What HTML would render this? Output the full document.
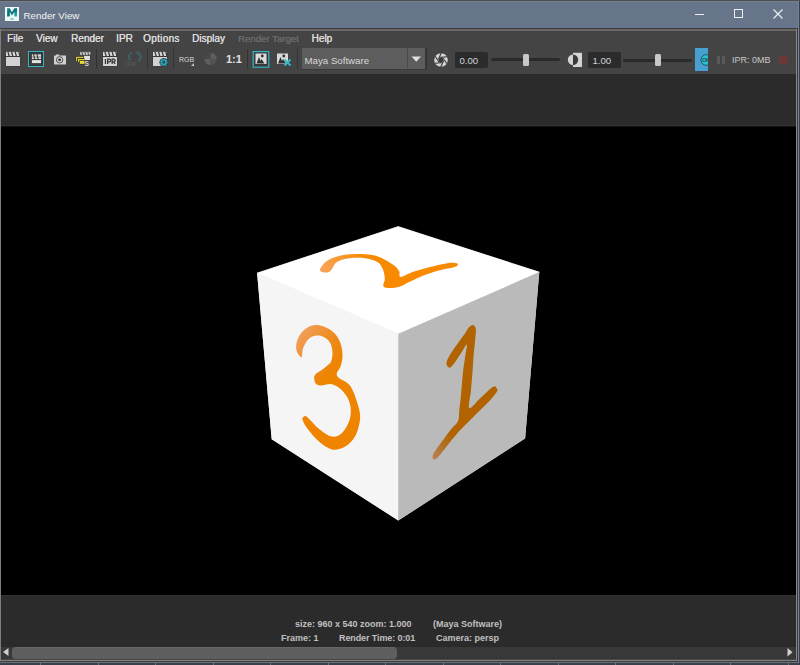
<!DOCTYPE html>
<html><head><meta charset="utf-8">
<style>
*{margin:0;padding:0;box-sizing:border-box}
html,body{width:800px;height:665px;overflow:hidden;background:#3a3a3a;font-family:"Liberation Sans",sans-serif}
.a{position:absolute}
.menu{position:absolute;top:33px;font-size:10px;color:#dcdcdc;text-shadow:0.35px 0 0 currentColor;line-height:12px;white-space:nowrap}
.sep{position:absolute;top:49px;width:1px;height:20px;background:#333}
.st{position:absolute;font-size:9px;font-weight:bold;color:#c0c0c0;line-height:10px;white-space:nowrap}
</style></head><body>
<!-- window frame top -->
<div class="a" style="left:0;top:0;width:800px;height:1px;background:#4a4f50"></div>
<div class="a" style="left:0;top:1px;width:798px;height:1px;background:#7a8090"></div>
<div class="a" style="left:0;top:2px;width:798px;height:26px;background:#667589"></div>
<div class="a" style="left:798px;top:1px;width:2px;height:664px;background:#3a3e44"></div>
<!-- title -->
<svg class="a" style="left:5px;top:7px" width="15" height="15" viewBox="0 0 15 15">
<defs><linearGradient id="mg" x1="0" y1="0" x2="1" y2="1"><stop offset="0" stop-color="#138a8a"/><stop offset="0.5" stop-color="#0b6f78"/><stop offset="1" stop-color="#22c2b8"/></linearGradient></defs>
<rect x="0" y="0" width="14" height="14" fill="#eef8f6"/>
<path d="M2.1 9.6V1.2H4.8L6.9 5.2 9.4 1.2H12.1V9.6H9.4V5L6.9 8.4 4.8 5V9.6z" fill="url(#mg)"/>
<rect x="5.3" y="11.2" width="3.5" height="1.4" fill="#60c8c8"/>
</svg>
<div class="a" style="left:23.5px;top:9.5px;font-size:9.8px;color:#f4f4f4;line-height:12px">Render View</div>
<!-- window controls -->
<div class="a" style="left:695px;top:14px;width:9px;height:1px;background:#f0f0f0"></div>
<div class="a" style="left:734px;top:9px;width:9px;height:9px;border:1px solid #f0f0f0"></div>
<svg class="a" style="left:773px;top:9px" width="10" height="10" viewBox="0 0 10 10"><path d="M0.5 0.5L9.5 9.5M9.5 0.5L0.5 9.5" stroke="#f0f0f0" stroke-width="1.1"/></svg>
<!-- inner frame -->
<div class="a" style="left:0;top:28px;width:798px;height:1px;background:#3c3a3e"></div>
<div class="a" style="left:0;top:29px;width:797px;height:2px;background:#6a6664"></div>
<div class="a" style="left:0;top:29px;width:1px;height:632px;background:#7e7e7e"></div>
<div class="a" style="left:796px;top:29px;width:1px;height:632px;background:#888"></div>
<div class="a" style="left:1px;top:31px;width:795px;height:43px;background:#444"></div>
<!-- menu -->
<div class="menu" style="left:7px">File</div>
<div class="menu" style="left:36px">View</div>
<div class="menu" style="left:71px">Render</div>
<div class="menu" style="left:116px">IPR</div>
<div class="menu" style="left:143px;letter-spacing:0.3px">Options</div>
<div class="menu" style="left:192px">Display</div>
<div class="menu" style="left:238px;color:#6a6a6a;font-size:9.6px">Render Target</div>
<div class="menu" style="left:311.5px">Help</div>
<!-- toolbar -->
<div class="sep" style="left:96px"></div>
<div class="sep" style="left:147px"></div>
<div class="sep" style="left:173px"></div>
<div class="sep" style="left:247px"></div>
<div class="sep" style="left:297px"></div>
<!-- icon1 clapboard -->
<svg class="a" style="left:5px;top:51px" width="16" height="16" viewBox="0 0 16 16">
<rect x="0.5" y="0" width="15" height="15.5" fill="#303030" opacity="0.6"/><rect x="1" y="0.8" width="14" height="4.2" fill="#d8d8d8"/>
<path d="M2.9 0.6l1.3 4.6M6.5 0.6l1.3 4.6M10.1 0.6l1.3 4.6M13.7 0.6l1.3 4.6" stroke="#3a3a3a" stroke-width="1.3"/>
<rect x="1" y="6" width="14" height="9" fill="#d2d2d2"/>
</svg>
<!-- icon2 teal border -->
<svg class="a" style="left:28px;top:51px" width="17" height="17" viewBox="0 0 17 17">
<rect x="0.5" y="0.5" width="15" height="15" fill="#333" stroke="#33b6c6" stroke-width="1"/>
<rect x="2" y="2" width="12" height="12" fill="#3c3c3c"/>
<rect x="3.9" y="3.4" width="9.1" height="4.6" fill="#dedede"/>
<path d="M5.6 3.2l1.1 5M9 3.2l1.1 5" stroke="#3a3a3a" stroke-width="1.1"/>
<rect x="3.9" y="5.6" width="9.1" height="0.8" fill="#3c3c3c" opacity="0.7"/>
<rect x="3.9" y="9.1" width="9.1" height="3" fill="#e2e2e2"/>
</svg>
<!-- icon3 camera -->
<svg class="a" style="left:53px;top:54px" width="14" height="11" viewBox="0 0 14 11">
<rect x="1" y="1.5" width="12" height="9" fill="#d0d0d0"/>
<rect x="3" y="0.5" width="3" height="1.5" fill="#d0d0d0"/>
<circle cx="6.6" cy="5.8" r="3.2" fill="#d0d0d0" stroke="#505050" stroke-width="1"/>
<circle cx="6.6" cy="5.8" r="1.4" fill="#303030"/>
</svg>
<!-- icon4 yellow stack -->
<svg class="a" style="left:75px;top:51px" width="16" height="16" viewBox="0 0 16 16">
<rect x="5.1" y="0.9" width="10.2" height="3" fill="#c8c8c8"/>
<path d="M6.8 0.9l0.8 3M9.8 0.9l0.8 3M12.8 0.9l0.8 3" stroke="#3a3a3a" stroke-width="0.9"/>
<rect x="8.5" y="4.3" width="7" height="5.2" fill="#2c2c2c"/>
<rect x="9" y="4.8" width="6" height="4.2" fill="#dedede"/>
<path d="M1.65 9.9V6.45H8.4" stroke="#2a2630" stroke-width="2.6" fill="none"/>
<path d="M1.65 9.9V6.45H8.4" stroke="#d4cc2c" stroke-width="1.4" fill="none"/>
<path d="M3.65 11.1V8.75H9.9" stroke="#2a2630" stroke-width="2.6" fill="none"/>
<path d="M3.65 11.1V8.75H9.9" stroke="#d8d030" stroke-width="1.4" fill="none"/>
<rect x="4.3" y="9.3" width="5.7" height="4.1" fill="#2a2630"/>
<rect x="4.8" y="9.8" width="4.7" height="3.1" fill="#e6dc2e"/>
<text x="9.6" y="14.8" font-size="6.6" font-weight="bold" fill="#d4d4d4" font-family="Liberation Sans">S</text>
</svg>
<!-- IPR clapboard -->
<svg class="a" style="left:102px;top:51px" width="16" height="16" viewBox="0 0 16 16">
<rect x="0.5" y="0" width="15" height="15.5" fill="#303030" opacity="0.6"/><rect x="1" y="0.8" width="14" height="4.2" fill="#d8d8d8"/>
<path d="M2.9 0.6l1.3 4.6M6.5 0.6l1.3 4.6M10.1 0.6l1.3 4.6M13.7 0.6l1.3 4.6" stroke="#3a3a3a" stroke-width="1.3"/>
<rect x="1" y="6" width="14" height="9" fill="#d2d2d2"/>
<path d="M3.45 8.1V12.9M5.65 12.9V8.1H7.3A1.35 1.35 0 0 1 7.3 10.8H5.65M10.15 12.9V8.1H11.8A1.35 1.35 0 0 1 11.8 10.8H10.15M11.7 10.8L13.1 12.9" stroke="#383838" stroke-width="1.3" fill="none"/>
</svg>
<!-- disabled refresh -->
<svg class="a" style="left:125px;top:50px" width="17" height="17" viewBox="0 0 17 17">
<path d="M6.5 2.5A5 5 0 0 0 5.5 10.5" stroke="#3e5f66" stroke-width="2.2" fill="none"/>
<path d="M10.5 2A5 5 0 0 1 13.5 11" stroke="#3e5f66" stroke-width="2.2" fill="none"/>
<text x="1" y="15.5" font-size="6" fill="#5c5c5c" font-family="Liberation Sans">IPR</text>
</svg>
<!-- gear clapboard -->
<svg class="a" style="left:152px;top:51px" width="17" height="16" viewBox="0 0 17 16">
<rect x="0.5" y="0" width="15" height="15.5" fill="#303030" opacity="0.6"/><rect x="1" y="0.8" width="14" height="4.2" fill="#d8d8d8"/>
<path d="M2.9 0.6l1.3 4.6M6.5 0.6l1.3 4.6M10.1 0.6l1.3 4.6M13.7 0.6l1.3 4.6" stroke="#3a3a3a" stroke-width="1.3"/>
<rect x="1" y="6" width="14" height="9" fill="#d2d2d2"/>
<circle cx="11.8" cy="11.3" r="4.4" fill="#444"/>
<circle cx="11.8" cy="11.3" r="3.1" fill="none" stroke="#1ea8c4" stroke-width="1.4" stroke-dasharray="1.3 1.1"/>
<circle cx="11.8" cy="11.3" r="2.2" fill="none" stroke="#1ea8c4" stroke-width="1.5"/>
</svg>
<!-- RGB -->
<div class="a" style="left:179px;top:55.5px;font-size:7px;color:#d8d8d8;line-height:8px;letter-spacing:0px">RGB</div>
<svg class="a" style="left:191px;top:63px" width="4" height="4"><polygon points="3,0 3,3 0,3" fill="#c8c8c8"/></svg>
<!-- disabled checker -->
<svg class="a" style="left:203px;top:52px" width="15" height="14" viewBox="0 0 15 14">
<path d="M7.5 7V0.8A6.2 6.2 0 0 1 13.7 7z" fill="#5e5e5e"/>
<path d="M7.5 7V13.2A6.2 6.2 0 0 1 1.3 7z" fill="#5e5e5e"/>
<path d="M7.5 7H13.7A6.2 6.2 0 0 1 7.5 13.2z" fill="#525252"/>
<path d="M7.5 7H1.3A6.2 6.2 0 0 1 7.5 0.8z" fill="#484848"/>
</svg>
<!-- 1:1 -->
<div class="a" style="left:226px;top:53px;font-size:11px;font-weight:bold;color:#e0e0e0;line-height:12px">1:1</div>
<!-- image teal -->
<svg class="a" style="left:252px;top:51px" width="18" height="17" viewBox="0 0 18 17">
<rect x="1.2" y="0.6" width="15.6" height="15.6" fill="#3a3a3a" stroke="#33b4c4" stroke-width="1.2"/>
<rect x="3.5" y="2.5" width="11" height="10.5" fill="#dcdcdc"/>
<path d="M4.5 12.5L7 6l1.5 4 1-2 3 4.5z" fill="#303030"/>
<circle cx="10.3" cy="5" r="1.4" fill="#303030"/>
</svg>
<!-- image x -->
<svg class="a" style="left:276px;top:53px" width="17" height="14" viewBox="0 0 17 14">
<rect x="1" y="0.5" width="11" height="10.5" fill="#d8d8d8"/>
<path d="M2 10.5L4.5 4l1.5 4 1-2 3 4.5z" fill="#303030"/>
<circle cx="7.8" cy="3" r="1.4" fill="#303030"/>
<path d="M8.5 6.5l6 6M14.5 6.5l-6 6" stroke="#30bcc8" stroke-width="1.8"/>
</svg>
<!-- dropdown -->
<div class="a" style="left:302px;top:48px;width:123px;height:21px;background:#5d5d5d"></div><div class="a" style="left:425px;top:48px;width:2px;height:22px;background:#363636"></div><div class="a" style="left:302px;top:69px;width:124px;height:1px;background:#3c3c3c"></div>
<div class="a" style="left:407px;top:48px;width:1px;height:21px;background:#4a4a4a"></div>
<div class="a" style="left:304.5px;top:54.5px;font-size:9.7px;color:#d8d8d8;line-height:12px">Maya Software</div>
<svg class="a" style="left:411px;top:56px" width="11" height="7"><polygon points="0.5,0.5 10,0.5 5.25,5.8" fill="#e0e0e0"/></svg>
<!-- aperture -->
<svg class="a" style="left:433px;top:52px" width="16" height="16" viewBox="0 0 16 16">
<circle cx="8" cy="8" r="7.1" fill="#d6d6d6"/>
<circle cx="8" cy="8" r="7.1" fill="none" stroke="#2e2e2e" stroke-width="0.5"/>
<g stroke="#3a3a3a" stroke-width="1.1" fill="none">
<path d="M10.54 8.92L7.71 14.99"/><path d="M8.47 10.66L1.80 11.24"/><path d="M5.93 9.74L2.09 4.25"/><path d="M5.46 7.08L8.29 1.01"/><path d="M7.53 5.34L14.20 4.76"/><path d="M10.07 6.26L13.91 11.75"/>
</g>
<polygon points="10.54,8.92 8.47,10.66 5.93,9.74 5.46,7.08 7.53,5.34 10.07,6.26" fill="#3a3a3a"/>
</svg>
<!-- field 0.00 -->
<div class="a" style="left:455px;top:52px;width:33px;height:16px;background:#2b2b2b;border-radius:2px"></div>
<div class="a" style="left:459.5px;top:55.3px;font-size:9.6px;color:#d0d4d8;line-height:12px">0.00</div>
<div class="a" style="left:491px;top:58px;width:69px;height:3px;background:#2a2a2a;border-radius:1.5px"></div>
<div class="a" style="left:523px;top:54px;width:6px;height:12px;background:#c8c8c8;border-radius:1.5px"></div>
<!-- half circle -->
<svg class="a" style="left:567px;top:52px" width="16" height="16" viewBox="0 0 16 16">
<rect x="6" y="0.8" width="9" height="14.2" fill="#d4d4d4"/>
<path d="M6 2.5A5.2 5.2 0 0 0 6 12.9z" fill="#d4d4d4"/>
<path d="M6 2.5A5.2 5.2 0 0 1 6 12.9z" fill="#3a3a3a"/>
</svg>
<!-- field 1.00 -->
<div class="a" style="left:588px;top:52px;width:33px;height:16px;background:#2b2b2b;border-radius:2px"></div>
<div class="a" style="left:592.5px;top:55.3px;font-size:9.6px;color:#d0d4d8;line-height:12px">1.00</div>
<div class="a" style="left:623px;top:59px;width:69px;height:3px;background:#2a2a2a;border-radius:1.5px"></div>
<div class="a" style="left:655px;top:54px;width:6px;height:12px;background:#c8c8c8;border-radius:1.5px"></div>
<!-- blue box -->
<div class="a" style="left:695px;top:48px;width:13px;height:23px;background:#48a0d0;overflow:hidden">
<svg style="position:absolute;left:4.5px;top:6px" width="12" height="12" viewBox="0 0 12 12"><circle cx="6.3" cy="6" r="5.3" fill="#2cc4cc" stroke="#204858" stroke-width="0.9"/><text x="2.2" y="8" font-size="5" font-weight="bold" fill="#204858" font-family="Liberation Sans">ON</text></svg>
</div>
<!-- pause -->
<div class="a" style="left:717px;top:56px;width:3px;height:8px;background:#5a5a5a"></div>
<div class="a" style="left:722px;top:56px;width:3px;height:8px;background:#5a5a5a"></div>
<div class="a" style="left:732px;top:54px;font-size:9px;color:#c8c8c8;line-height:12px">IPR: 0MB</div>
<div class="a" style="left:779px;top:56px;width:9px;height:8px;background:#6a3838"></div>

<!-- dark area above image -->
<div class="a" style="left:1px;top:74px;width:795px;height:52px;background:#2b2b2b"></div>
<div class="a" style="left:1px;top:125px;width:795px;height:1px;background:#333"></div><div class="a" style="left:1px;top:126px;width:795px;height:1px;background:#121212"></div><div class="a" style="left:1px;top:127px;width:795px;height:468px;background:#000"></div><div class="a" style="left:1px;top:595px;width:795px;height:1px;background:#323232"></div>
<div class="a" style="left:1px;top:596px;width:795px;height:51px;background:#2b2b2b"></div>
<!-- cube -->
<svg class="a" style="left:0;top:0" width="800" height="665" viewBox="0 0 800 665">
<defs><filter id="bl" x="-10%" y="-10%" width="120%" height="120%"><feGaussianBlur stdDeviation="0.7"/></filter>
<linearGradient id="g3" gradientUnits="userSpaceOnUse" x1="296" y1="332" x2="338" y2="362"><stop offset="0" stop-color="#f1a262"/><stop offset="0.55" stop-color="#ef8d26"/><stop offset="1" stop-color="#ee8400"/></linearGradient>
<linearGradient id="g2" gradientUnits="userSpaceOnUse" x1="320" y1="268" x2="365" y2="256"><stop offset="0" stop-color="#f9a45c"/><stop offset="1" stop-color="#f88a00"/></linearGradient>
<linearGradient id="g1" gradientUnits="userSpaceOnUse" x1="434" y1="458" x2="452" y2="436"><stop offset="0" stop-color="#b88050"/><stop offset="1" stop-color="#b06400"/></linearGradient>
<clipPath id="cl"><polygon points="257.1,273 398.4,333.8 398.3,520.5 271.7,439.3"/></clipPath>
<clipPath id="cr"><polygon points="398.4,333.8 539.3,272.1 525.1,438.5 398.3,520.5"/></clipPath>
<clipPath id="ct"><polygon points="398.2,226.4 539.3,272.1 398.4,333.8 257.1,273"/></clipPath>
</defs>
<polygon points="398.2,226.4 539.3,272.1 525.1,438.5 398.3,520.5 271.7,439.3 257.1,273" fill="#e0e0e0"/>
<polygon points="398.2,226.4 539.3,272.1 398.4,333.8 257.1,273" fill="#ffffff" stroke="#ffffff" stroke-width="0.4"/>
<polygon points="257.1,273 398.4,333.8 398.3,520.5 271.7,439.3" fill="#f5f5f5"/>
<polygon points="398.4,333.8 539.3,272.1 525.1,438.5 398.3,520.5" fill="#bababa"/>
<path clip-path="url(#ct)" filter="url(#bl)" fill="url(#g2)" d="M320.3 271.1 C319.7 270.3 319.8 269.4 320.6 268.0 C321.4 266.6 323.2 264.0 325.0 262.4 C326.8 260.8 328.8 259.6 331.2 258.5 C333.8 257.4 336.9 256.5 340.0 255.8 C343.1 255.1 345.8 254.6 350.0 254.3 C354.2 254.0 360.3 253.8 365.0 254.2 C369.7 254.5 374.0 255.1 378.0 256.4 C382.0 257.7 386.3 260.5 389.2 262.2 C392.1 263.9 393.8 264.9 395.5 266.5 C397.2 268.1 398.4 269.8 399.3 271.5 C400.2 273.2 398.4 276.9 400.6 277.0 C402.8 277.1 407.6 273.7 412.5 272.0 C417.4 270.3 424.2 268.5 430.0 267.0 C435.8 265.5 443.3 263.9 447.5 263.2 C451.7 262.5 453.6 262.8 455.4 263.0 C457.1 263.2 458.1 263.9 458.0 264.6 C457.9 265.3 457.7 266.0 454.5 267.0 C451.3 268.0 444.3 269.0 438.8 270.6 C433.2 272.2 426.4 274.5 421.2 276.5 C416.1 278.5 411.7 280.9 408.1 282.6 C404.5 284.3 402.5 285.9 399.4 286.8 C396.3 287.7 392.3 288.1 389.6 288.0 C386.9 287.9 384.2 287.7 383.4 286.2 C382.6 284.7 384.9 281.8 384.8 279.0 C384.7 276.2 384.2 272.3 383.0 269.5 C381.8 266.7 380.5 263.9 377.5 262.0 C374.5 260.1 369.6 258.8 365.0 258.2 C360.4 257.6 354.0 257.9 350.0 258.2 C346.0 258.5 343.6 259.1 341.2 259.9 C338.9 260.7 337.1 261.6 335.6 263.0 C334.1 264.4 333.5 266.5 332.5 268.0 C331.5 269.5 330.8 271.0 329.4 271.8 C328.0 272.5 325.9 272.7 324.4 272.6 C322.9 272.5 320.9 271.9 320.3 271.1Z"/>
<path clip-path="url(#cl)" filter="url(#bl)" fill="url(#g3)" d="M300.8 357.1 C299.9 356.3 297.4 353.5 296.7 351.0 C296.0 348.5 296.0 345.2 296.7 342.3 C297.4 339.4 299.0 336.0 300.8 333.5 C302.6 331.0 305.0 328.8 307.5 327.4 C310.0 326.0 312.8 325.1 315.6 325.0 C318.4 324.9 321.6 325.6 324.4 326.7 C327.2 327.8 330.1 329.5 332.5 331.5 C334.9 333.5 337.0 336.0 338.6 338.9 C340.2 341.8 341.4 345.6 342.0 349.0 C342.6 352.4 342.6 356.1 342.3 359.1 C342.0 362.1 341.2 364.2 340.3 367.0 C339.4 369.8 335.5 372.8 337.1 375.9 C338.7 379.0 346.5 380.9 349.9 385.5 C353.3 390.1 355.8 397.9 357.5 403.4 C359.2 408.9 360.5 413.2 360.1 418.7 C359.7 424.2 357.6 431.9 355.0 436.6 C352.4 441.3 348.6 444.7 344.8 446.8 C341.0 448.9 336.3 450.2 332.0 449.4 C327.7 448.5 323.2 445.1 319.2 441.7 C315.1 438.3 310.5 432.5 307.7 428.9 C304.9 425.3 303.2 422.1 302.6 420.0 C302.0 417.9 303.1 416.9 304.0 416.5 C304.9 416.1 305.2 415.3 307.7 417.4 C310.2 419.5 315.1 425.7 319.2 428.9 C323.2 432.1 328.2 436.0 332.0 436.6 C335.8 437.2 339.2 435.8 342.2 432.8 C345.2 429.8 348.6 423.6 349.9 418.7 C351.2 413.8 351.2 408.1 349.9 403.4 C348.6 398.7 345.2 393.8 342.2 390.6 C339.2 387.4 335.6 385.1 332.0 384.2 C328.4 383.3 323.3 385.7 320.5 385.5 C317.7 385.3 316.3 384.6 315.3 382.9 C314.3 381.2 313.6 377.3 314.7 375.2 C315.8 373.1 319.4 371.9 321.7 370.1 C324.0 368.3 326.9 366.0 328.5 364.5 C330.1 363.0 330.5 363.2 331.2 361.2 C331.9 359.2 332.6 355.3 332.5 352.4 C332.4 349.5 331.6 346.0 330.5 343.6 C329.4 341.2 327.7 339.6 325.8 338.2 C323.9 336.8 321.2 335.8 319.0 335.5 C316.8 335.2 314.3 335.6 312.3 336.5 C310.3 337.4 308.5 338.8 306.9 340.9 C305.3 343.0 303.6 346.5 302.8 349.0 C302.0 351.5 302.4 354.4 302.1 355.8 C301.8 357.2 301.7 357.9 300.8 357.1Z"/>
<path clip-path="url(#cr)" filter="url(#bl)" fill="url(#g1)" d="M448.0 367.1 C447.2 366.4 446.2 364.5 446.5 362.6 C446.8 360.7 447.8 358.8 449.5 355.8 C451.2 352.8 454.5 348.2 457.0 344.6 C459.5 341.0 462.6 336.9 464.6 334.0 C466.6 331.1 467.6 328.8 469.0 327.3 C470.4 325.8 471.7 324.8 472.8 325.0 C473.9 325.2 475.4 326.2 475.8 328.8 C476.2 331.4 475.5 336.3 475.1 340.8 C474.7 345.3 474.0 350.6 473.6 355.8 C473.2 361.0 472.9 366.3 472.5 372.0 C472.1 377.7 471.5 384.0 471.0 390.0 C470.5 396.0 467.8 406.6 469.3 408.0 C470.8 409.4 476.1 402.0 480.0 398.5 C483.9 395.0 490.2 388.4 493.0 386.8 C495.8 385.1 496.1 387.7 496.8 388.5 C497.4 389.3 498.0 389.7 497.0 391.5 C496.0 393.3 493.9 396.0 490.8 399.5 C487.6 403.0 481.2 409.1 478.0 412.3 C474.8 415.5 474.9 415.5 471.8 418.6 C468.7 421.7 463.3 426.7 459.3 431.1 C455.3 435.5 451.4 440.6 447.6 445.2 C443.8 449.8 439.1 456.4 436.6 458.5 C434.1 460.6 433.1 458.7 432.7 457.7 C432.3 456.7 432.7 455.0 434.3 452.3 C435.9 449.6 439.2 445.2 442.1 441.3 C445.0 437.4 448.8 432.2 451.5 428.8 C454.2 425.4 456.8 424.1 458.1 421.0 C459.4 417.9 458.8 414.3 459.3 410.0 C459.8 405.7 460.4 401.3 461.0 395.0 C461.6 388.7 462.3 378.5 463.0 372.0 C463.7 365.5 464.7 360.4 465.3 355.8 C465.9 351.2 467.6 345.0 466.8 344.6 C466.1 344.2 462.8 350.6 460.8 353.6 C458.8 356.6 456.4 360.4 454.8 362.6 C453.2 364.9 452.1 366.4 451.0 367.1 C449.9 367.9 448.8 367.9 448.0 367.1Z"/>
</svg>
<!-- status -->
<div class="st" style="left:295px;top:619px">size: 960 x 540 zoom: 1.000</div>
<div class="st" style="left:433px;top:619px">(Maya Software)</div>
<div class="st" style="left:281px;top:633px">Frame: 1</div>
<div class="st" style="left:339px;top:633px;letter-spacing:-0.1px">Render Time: 0:01</div>
<div class="st" style="left:436px;top:633px">Camera: persp</div>
<!-- scrollbar -->
<div class="a" style="left:1px;top:647px;width:795px;height:12px;background:#383838"></div><div class="a" style="left:1px;top:659px;width:795px;height:1px;background:#474545"></div>
<div class="a" style="left:12px;top:647px;width:385px;height:12px;background:#5e5e5e;border-top:1px solid #666;border-radius:4px"></div>
<svg class="a" style="left:3px;top:648px" width="6" height="8"><polygon points="5.5,0 5.5,8 0,4" fill="#d0d0d0"/></svg>
<svg class="a" style="left:787px;top:648px" width="6" height="9"><polygon points="0.5,0 0.5,8.5 5.5,4.2" fill="#d0d0d0"/></svg>
<div class="a" style="left:0;top:660px;width:797px;height:1px;background:#828282"></div>
<div class="a" style="left:0;top:661px;width:800px;height:1px;background:#3a3c3e"></div>
<div class="a" style="left:0;top:662px;width:798px;height:1px;background:#6a7078"></div>
<div class="a" style="left:0;top:663px;width:800px;height:2px;background:#3a4048"></div>
<div class="a" style="left:40.0px;top:663px;width:1px;height:2px;background:#6a7280"></div><div class="a" style="left:97.5px;top:663px;width:1px;height:2px;background:#6a7280"></div><div class="a" style="left:155.0px;top:663px;width:1px;height:2px;background:#6a7280"></div><div class="a" style="left:212.5px;top:663px;width:1px;height:2px;background:#6a7280"></div><div class="a" style="left:270.0px;top:663px;width:1px;height:2px;background:#6a7280"></div><div class="a" style="left:327.5px;top:663px;width:1px;height:2px;background:#6a7280"></div><div class="a" style="left:385.0px;top:663px;width:1px;height:2px;background:#6a7280"></div><div class="a" style="left:442.5px;top:663px;width:1px;height:2px;background:#6a7280"></div><div class="a" style="left:500.0px;top:663px;width:1px;height:2px;background:#6a7280"></div><div class="a" style="left:557.5px;top:663px;width:1px;height:2px;background:#6a7280"></div><div class="a" style="left:615.0px;top:663px;width:1px;height:2px;background:#6a7280"></div><div class="a" style="left:672.5px;top:663px;width:1px;height:2px;background:#6a7280"></div><div class="a" style="left:730.0px;top:663px;width:1px;height:2px;background:#6a7280"></div><div class="a" style="left:787.5px;top:663px;width:1px;height:2px;background:#6a7280"></div>
<div class="a" style="left:798px;top:1px;width:1px;height:662px;background:#76849a"></div>
</body></html>
